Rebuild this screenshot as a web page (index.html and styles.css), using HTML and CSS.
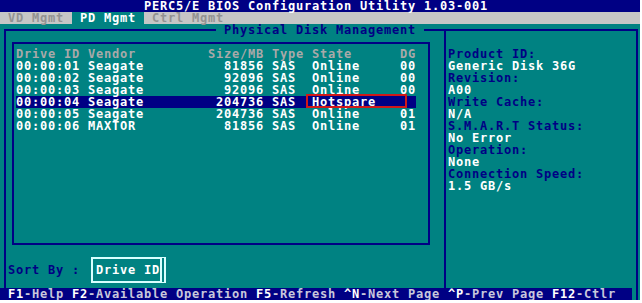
FILE: index.html
```html
<!DOCTYPE html>
<html lang="en">
<head>
    <meta charset="UTF-8">
    <title>PERC5/E BIOS Configuration Utility</title>
    <link rel="stylesheet" href="styles.css">
</head>
<body>
    <div class="screen">
        <div class="title-bar">PERC5/E BIOS Configuration Utility 1.03-001</div>

        <div class="tabs">
            <span class="tab"> VD Mgmt </span><span class="tab active"> PD Mgmt </span><span class="tab"> Ctrl Mgmt </span>
        </div>

        <div class="main">
            <div class="frame">
                <span class="frame-title">Physical Disk Management</span>

                <div class="left-pane">
                    <div class="disk-list">
                        <div class="row head">
                            <span>Drive ID</span><span>Vendor</span><span class="num">Size/MB</span><span class="type">Type</span><span>State</span><span>DG</span>
                        </div>
                        <div class="row">
                            <span>00:00:01</span><span>Seagate</span><span class="num">81856</span><span class="type">SAS</span><span>Online</span><span>00</span>
                        </div>
                        <div class="row">
                            <span>00:00:02</span><span>Seagate</span><span class="num">92096</span><span class="type">SAS</span><span>Online</span><span>00</span>
                        </div>
                        <div class="row">
                            <span>00:00:03</span><span>Seagate</span><span class="num">92096</span><span class="type">SAS</span><span>Online</span><span>00</span>
                        </div>
                        <div class="row selected">
                            <span>00:00:04</span><span>Seagate</span><span class="num">204736</span><span class="type">SAS</span><span class="state marked">Hotspare</span><span></span>
                        </div>
                        <div class="row">
                            <span>00:00:05</span><span>Seagate</span><span class="num">204736</span><span class="type">SAS</span><span>Online</span><span>01</span>
                        </div>
                        <div class="row">
                            <span>00:00:06</span><span>MAXTOR</span><span class="num">81856</span><span class="type">SAS</span><span>Online</span><span>01</span>
                        </div>
                    </div>

                    <div class="sort-row">
                        <span class="sort-label">Sort By :</span>
                        <span class="sort-btn">Drive ID</span>
                    </div>
                </div>

                <div class="info-pane">
                    <div class="label">Product ID:</div>
                    <div class="value">Generic Disk 36G</div>
                    <div class="label">Revision:</div>
                    <div class="value">A00</div>
                    <div class="label">Write Cache:</div>
                    <div class="value">N/A</div>
                    <div class="label">S.M.A.R.T Status:</div>
                    <div class="value">No Error</div>
                    <div class="label">Operation:</div>
                    <div class="value">None</div>
                    <div class="label">Connection Speed:</div>
                    <div class="value">1.5 GB/s</div>
                </div>
            </div>
        </div>

        <div class="footer">
            <div class="footer-bar"><b>F1</b>-Help <b>F2</b>-Available Operation <b>F5</b>-Refresh <b>^N</b>-Next Page <b>^P</b>-Prev Page <b>F12</b>-Ctlr</div>
            <div class="footer-edge"></div>
        </div>
    </div>
</body>
</html>
```

FILE: styles.css
```css
body {
    margin: 0;
    background: #ffffff;
}

.screen {
    width: 640px;
    height: 300px;
    background: #008282;
    font-family: "DejaVu Sans Mono", "Liberation Mono", monospace;
    font-weight: bold;
    font-size: 12px;
    letter-spacing: 0.7754px;
    line-height: 12px;
    white-space: nowrap;
    color: #ffffff;
}

.title-bar {
    height: 12px;
    padding-left: 144px;
    background: #000084;
    color: #ffffff;
}

.tabs {
    height: 12px;
    background: #c6c6c6;
    display: flex;
}

.tab {
    white-space: pre;
    color: #929292;
}

.tab.active {
    background: #008282;
    color: #ffffff;
}

.main {
    height: 264px;
    padding-top: 5px;
    box-sizing: border-box;
}

.frame {
    position: relative;
    display: flex;
    height: 259px;
    margin: 0 2px 0 4px;
    border: 2px solid #000084;
    border-bottom: none;
    box-sizing: border-box;
}

.frame-title {
    position: absolute;
    top: -7px;
    left: 210px;
    padding: 0 8px;
    background: #008282;
    color: #000084;
}

.left-pane {
    width: 440px;
    padding: 11px 0 0 6px;
    border-right: 2px solid #000084;
    box-sizing: border-box;
}

.disk-list {
    width: 418px;
    height: 203px;
    padding: 4px 0 0 2px;
    border: 2px solid #000084;
    box-sizing: border-box;
}

.row {
    display: grid;
    grid-template-columns: 72px 120px 56px 48px 88px 16px;
    width: 400px;
    height: 12px;
}

.row.head {
    color: #a9a9a9;
}

.row .num {
    text-align: right;
}

.row .type {
    padding-left: 8px;
}

.row.selected {
    background: #000084;
}

.state.marked {
    position: relative;
}

.state.marked::after {
    content: "";
    position: absolute;
    left: -6px;
    top: -2px;
    width: 101px;
    height: 14px;
    border: 2px solid #d01818;
    box-sizing: border-box;
}

.sort-row {
    display: flex;
    align-items: center;
    margin: 12px 0 0 -4px;
}

.sort-label {
    color: #000084;
}

.sort-btn {
    margin-left: 11px;
    padding: 5px 0 5px 3px;
    border: 2px solid #d8ffff;
    border-right: 6px double #d8ffff;
}

.info-pane {
    flex: 1;
    padding: 17px 0 0 2px;
}

.info-pane .label {
    color: #000084;
}

.info-pane .value {
    color: #ffffff;
}

.footer {
    display: flex;
    height: 12px;
}

.footer-bar {
    width: 624px;
    padding-left: 8px;
    background: #000084;
    color: #c8c8dc;
}

.footer-bar b {
    color: #ffffff;
}

.footer-edge {
    width: 4px;
    border-right: 2px solid #000084;
}
```
